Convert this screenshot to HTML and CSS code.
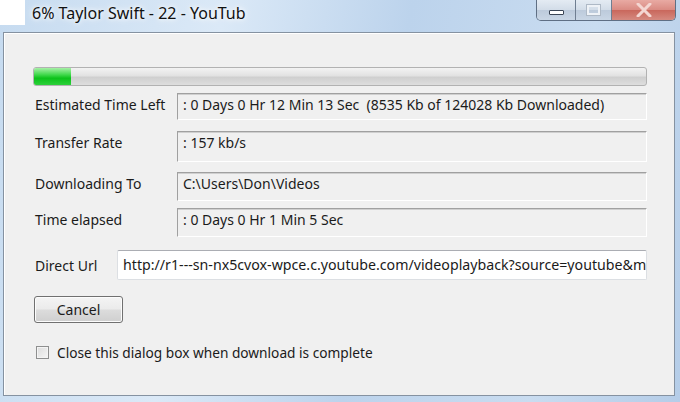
FILE: index.html
```html
<!DOCTYPE html>
<html lang="en">
<head>
    <meta charset="UTF-8">
    <title>6% Taylor Swift - 22 - YouTub</title>
    <link rel="stylesheet" href="styles.css">
</head>
<body>
    <div class="window">
        <div class="titlebar">
            <div class="app-icon"></div>
            <div class="title">6% Taylor Swift - 22 - YouTub</div>
            <div class="caption-buttons">
                <div class="cap-btn cap-min"><span class="min-glyph"></span></div>
                <div class="cap-btn cap-max"><span class="max-glyph"></span></div>
                <div class="cap-btn cap-close">
                    <svg width="18" height="14" viewBox="0 0 18 14">
                        <path d="M3 1 L15 13 M15 1 L3 13" stroke="#f4d6d2" stroke-width="3" stroke-linecap="round"/>
                    </svg>
                </div>
            </div>
        </div>

        <div class="client">
            <div class="progress">
                <div class="progress-fill" style="width: 6%"></div>
            </div>

            <div class="rows">
                <div class="row row-1">
                    <div class="label">Estimated Time Left</div>
                    <div class="static-box">: 0 Days 0 Hr 12 Min 13 Sec&nbsp;&nbsp;(8535 Kb of 124028 Kb Downloaded)</div>
                </div>
                <div class="row row-2">
                    <div class="label">Transfer Rate</div>
                    <div class="static-box">: 157 kb/s</div>
                </div>
                <div class="row row-3">
                    <div class="label">Downloading To</div>
                    <div class="static-box">C:\Users\Don\Videos</div>
                </div>
                <div class="row row-4">
                    <div class="label">Time elapsed</div>
                    <div class="static-box">: 0 Days 0 Hr 1 Min 5 Sec</div>
                </div>
                <div class="row url-row">
                    <div class="label url-label">Direct Url</div>
                    <div class="url-box">http://r1---sn-nx5cvox-wpce.c.youtube.com/videoplayback?source=youtube&amp;m</div>
                </div>
            </div>

            <button class="cancel" type="button">Cancel</button>

            <label class="close-check">
                <span class="checkbox"></span>
                Close this dialog box when download is complete
            </label>
        </div>
    </div>
</body>
</html>
```

FILE: styles.css
```css
:root {
    --face: #f0f0f0;
    --text: #1b1b1b;
}

body {
    margin: 0;
    width: 680px;
    height: 402px;
    overflow: hidden;
    font-family: "Noto Sans", "Open Sans", sans-serif;
    font-size: 14px;
    color: var(--text);
}

.window {
    width: 680px;
    height: 402px;
    background: linear-gradient(100deg, #c6dbf0 0%, #dbe9f7 30%, #bcd3ec 55%, #c9dcf0 80%, #b5cde8 100%);
    display: flex;
    flex-direction: column;
}

.titlebar {
    height: 32px;
    display: flex;
    align-items: flex-start;
    flex-shrink: 0;
}

.app-icon {
    width: 25px;
    height: 25px;
    background: #fff;
}

.title {
    margin-left: 7px;
    margin-top: 2px;
    font-size: 16px;
    color: #111;
    text-shadow: 0 0 8px #fff, 0 0 4px #fff;
    flex: 1;
}

.caption-buttons {
    display: flex;
    margin-right: 4px;
    height: 20px;
    border: 1px solid #5f6f84;
    border-top: none;
    border-radius: 0 0 5px 5px;
    overflow: hidden;
}

.cap-btn {
    height: 20px;
    display: flex;
    align-items: center;
    justify-content: center;
}

.cap-min,
.cap-max {
    background: linear-gradient(#e4ebf3, #d2dce8 50%, #bccadb 51%, #c9d6e5);
    border-right: 1px solid #6f7e91;
}

.cap-min {
    width: 38px;
}

.cap-max {
    width: 35px;
}

.cap-close {
    width: 63px;
    background: linear-gradient(#e8aaa3, #d98a82 50%, #c9675c 51%, #d58a80);
}

.min-glyph {
    width: 13px;
    height: 3px;
    margin-top: 4px;
    background: #fff;
    border: 1px solid #3b4656;
    border-radius: 1px;
}

.max-glyph {
    width: 9px;
    height: 6px;
    border: 2px solid #eef2f7;
    outline: 1px solid #aeb9c6;
}

.client {
    flex: 1;
    margin: 0 5px 6px 3px;
    background: var(--face);
    border: 1px solid #8592a1;
    box-shadow: inset 1px 1px 0 #fff;
    padding: 34px 28px 0 29px;
    display: flex;
    flex-direction: column;
    align-items: flex-start;
}

.progress {
    width: 612px;
    height: 17px;
    border: 1px solid #b2b2b2;
    border-radius: 3px;
    background: linear-gradient(#f3f3f3, #e2e2e2 45%, #cfcfcf 55%, #dedede);
    overflow: hidden;
}

.progress-fill {
    height: 100%;
    background: linear-gradient(#a6f0a6, #3fd84a 40%, #0cc21a 60%, #2cd03a);
}

.rows {
    display: flex;
    flex-direction: column;
    width: 614px;
    margin-top: 7px;
}

.row {
    display: flex;
    align-items: flex-start;
}

.row-1 .static-box { height: 27px; }
.row-2 { margin-top: 11px; }
.row-2 .static-box { height: 31px; }
.row-3 { margin-top: 10px; }
.row-4 { margin-top: 7px; }

.url-row {
    margin-top: 13px;
    align-items: center;
}

.label {
    width: 142px;
    padding-left: 2px;
    padding-top: 2px;
}

.url-label {
    width: 82px;
    padding-top: 0;
}

.static-box {
    flex: 1;
    box-sizing: border-box;
    height: 29px;
    padding: 1px 0 0 5px;
    border: 1px solid;
    border-color: #a0a0a0 #fff #fff #a0a0a0;
    box-shadow: inset 0 1px 0 #cfcfcf;
    white-space: pre;
}

.url-box {
    flex: 1;
    height: 30px;
    box-sizing: border-box;
    padding: 4px 0 0 5px;
    background: #fff;
    border: 1px solid #dcdfe3;
    border-top-color: #abadb3;
    border-radius: 2px;
    font-size: 14.2px;
    white-space: nowrap;
    overflow: hidden;
}

.cancel {
    margin-top: 16px;
    margin-left: 1px;
    width: 89px;
    height: 27px;
    font-family: inherit;
    font-size: 14px;
    color: var(--text);
    border: 1px solid #707070;
    border-radius: 3px;
    background: linear-gradient(#f4f4f4, #ebebeb 48%, #dcdcdc 52%, #cfcfcf);
    box-shadow: inset 0 0 0 1px #fcfcfc;
}

.close-check {
    margin-top: 20px;
    margin-left: 3px;
    display: flex;
    align-items: center;
    gap: 8px;
    font-size: 13.7px;
}

.checkbox {
    width: 11px;
    height: 11px;
    border: 1px solid #8e8f8f;
    background: linear-gradient(135deg, #dcdcdc, #f6f6f6);
    box-shadow: inset 0 0 0 1px #f4f4f4;
}
```
